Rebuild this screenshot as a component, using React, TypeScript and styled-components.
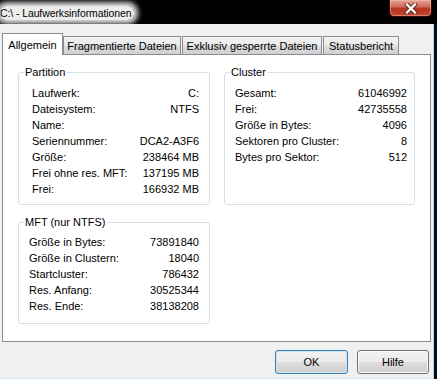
import React from "react";
import styled, { createGlobalStyle } from "styled-components";

const Global = createGlobalStyle`
  html, body { margin: 0; padding: 0; background: #050505; }
  body {
    width: 437px;
    height: 379px;
    overflow: hidden;
    font-family: "Liberation Sans", Arial, sans-serif;
    font-size: 11px;
    color: #000;
  }
`;

const Window = styled.div`
  width: 437px;
  height: 379px;
  display: flex;
  flex-direction: column;
  background: #0a0d10;
`;

const TitleBar = styled.div`
  flex: none;
  height: 24px;
  display: flex;
  align-items: flex-start;
  justify-content: space-between;
  background: #000;
`;

const Title = styled.span`
  margin-top: 6px;
  height: 14px;
  line-height: 14px;
  padding-right: 3px;
  font-family: "Liberation Sans", Arial, sans-serif;
  font-size: 10.5px;
  letter-spacing: -0.1px;
  color: #000;
  white-space: nowrap;
  background: rgba(255, 255, 255, 0.93);
  border-radius: 6px;
  box-shadow: 0 0 5px 4px rgba(255, 255, 255, 0.85);
`;

const CloseButton = styled.div`
  width: 43px;
  height: 17px;
  margin-right: 5px;
  box-sizing: border-box;
  display: flex;
  align-items: center;
  justify-content: center;
  border: 1px solid #3a0b06;
  border-top: none;
  border-radius: 0 0 5px 5px;
  background: linear-gradient(#e3a497 0%, #cf6f5c 40%, #b8321d 55%, #c24a2f 100%);
  box-shadow: inset 0 0 0 1px rgba(255, 200, 190, 0.45);
`;

const Body = styled.div`
  flex: 1;
  display: flex;
  flex-direction: column;
  margin-right: 3px;
  padding: 9px 2px 0 2px;
  background: #f0f0f0;
  border-right: 1px solid #b6d2ea;
  border-bottom: 1px solid #cfe5f6;
`;

const TabRow = styled.div`
  display: flex;
  align-items: flex-end;
  height: 22px;
  position: relative;
  z-index: 1;
`;

const Tab = styled.div<{ $w: number; $active?: boolean }>`
  box-sizing: border-box;
  width: ${(p) => p.$w}px;
  height: ${(p) => (p.$active ? 22 : 18)}px;
  margin-bottom: ${(p) => (p.$active ? 0 : 1)}px;
  margin-right: ${(p) => (p.$active ? 0 : 1)}px;
  border: 1px solid #898c95;
  border-bottom: none;
  display: flex;
  justify-content: center;
  padding-top: ${(p) => (p.$active ? 4 : 2)}px;
  line-height: 14px;
  white-space: nowrap;
  background: ${(p) =>
    p.$active
      ? "#fff"
      : "linear-gradient(#f3f3f3 0%, #ebebeb 45%, #dcdcdc 55%, #d0d0d0 100%)"};
`;

const Panel = styled.div`
  box-sizing: border-box;
  height: 288px;
  margin-top: -1px;
  border: 1px solid #898c95;
  background: #fff;
  display: grid;
  grid-template-columns: 192px 191px;
  column-gap: 14px;
  row-gap: 11px;
  align-content: start;
  padding: 11px 15px 0 15px;
`;

const Group = styled.fieldset<{ $col?: number }>`
  margin: 0;
  padding: 0;
  min-width: 0;
  border: 1px solid #d5dfe5;
  border-radius: 3px;
  grid-column: ${(p) => p.$col ?? "auto"};
`;

const Legend = styled.legend`
  margin-left: 5px;
  padding: 0 2px 0 1px;
  height: 13px;
  line-height: 13px;
  font-size: 11px;
`;

const Rows = styled.div<{ $pl: number; $pr: number; $pt: number; $pb: number }>`
  display: flex;
  flex-direction: column;
  padding: ${(p) => `${p.$pt}px ${p.$pr}px ${p.$pb}px ${p.$pl}px`};
`;

const Row = styled.div`
  display: flex;
  justify-content: space-between;
  height: 16px;
  line-height: 16px;
  white-space: nowrap;
`;

const ButtonRow = styled.div`
  display: flex;
  justify-content: flex-end;
  gap: 9px;
  padding: 8px 2px 0 0;
`;

const Button = styled.div<{ $w: number; $default?: boolean }>`
  box-sizing: border-box;
  width: ${(p) => p.$w}px;
  height: 24px;
  display: flex;
  align-items: center;
  justify-content: center;
  border-radius: 3px;
  border: 1px solid ${(p) => (p.$default ? "#3c7fb1" : "#707070")};
  box-shadow: inset 0 0 0 1px ${(p) => (p.$default ? "#c6e6f8" : "#fbfbfb")};
  background: linear-gradient(#f2f2f2 0%, #ebebeb 48%, #dddddd 52%, #cfcfcf 100%);
`;

type Item = [string, string];

const partition: Item[] = [
  ["Laufwerk:", "C:"],
  ["Dateisystem:", "NTFS"],
  ["Name:", ""],
  ["Seriennummer:", "DCA2-A3F6"],
  ["Größe:", "238464 MB"],
  ["Frei ohne res. MFT:", "137195 MB"],
  ["Frei:", "166932 MB"],
];

const cluster: Item[] = [
  ["Gesamt:", "61046992"],
  ["Frei:", "42735558"],
  ["Größe in Bytes:", "4096"],
  ["Sektoren pro Cluster:", "8"],
  ["Bytes pro Sektor:", "512"],
];

const mft: Item[] = [
  ["Größe in Bytes:", "73891840"],
  ["Größe in Clustern:", "18040"],
  ["Startcluster:", "786432"],
  ["Res. Anfang:", "30525344"],
  ["Res. Ende:", "38138208"],
];

const List = ({ items }: { items: Item[] }) => (
  <>
    {items.map(([k, v]) => (
      <Row key={k}>
        <span>{k}</span>
        <span>{v}</span>
      </Row>
    ))}
  </>
);

export default function App() {
  return (
    <>
      <Global />
      <Window>
        <TitleBar>
          <Title>C:\ - Laufwerksinformationen</Title>
          <CloseButton>
            <svg width="14" height="11" viewBox="0 0 14 11">
              <path d="M3 1.5 L11 9.5 M11 1.5 L3 9.5" stroke="#5a1a10" strokeWidth="4" strokeLinecap="square" />
              <path d="M3 1.5 L11 9.5 M11 1.5 L3 9.5" stroke="#fff" strokeWidth="2.4" strokeLinecap="square" />
            </svg>
          </CloseButton>
        </TitleBar>
        <Body>
          <TabRow>
            <Tab $w={61} $active>Allgemein</Tab>
            <Tab $w={118}>Fragmentierte Dateien</Tab>
            <Tab $w={140}>Exklusiv gesperrte Dateien</Tab>
            <Tab $w={76}>Statusbericht</Tab>
          </TabRow>
          <Panel>
            <Group>
              <Legend>Partition</Legend>
              <Rows $pl={13} $pr={10} $pt={6} $pb={7}>
                <List items={partition} />
              </Rows>
            </Group>
            <Group>
              <Legend>Cluster</Legend>
              <Rows $pl={10} $pr={7} $pt={6} $pb={7}>
                <List items={cluster} />
              </Rows>
            </Group>
            <Group $col={1}>
              <Legend>MFT (nur NTFS)</Legend>
              <Rows $pl={10} $pr={10} $pt={5} $pb={9}>
                <List items={mft} />
              </Rows>
            </Group>
          </Panel>
          <ButtonRow>
            <Button $w={73} $default>OK</Button>
            <Button $w={72}>Hilfe</Button>
          </ButtonRow>
        </Body>
      </Window>
    </>
  );
}
